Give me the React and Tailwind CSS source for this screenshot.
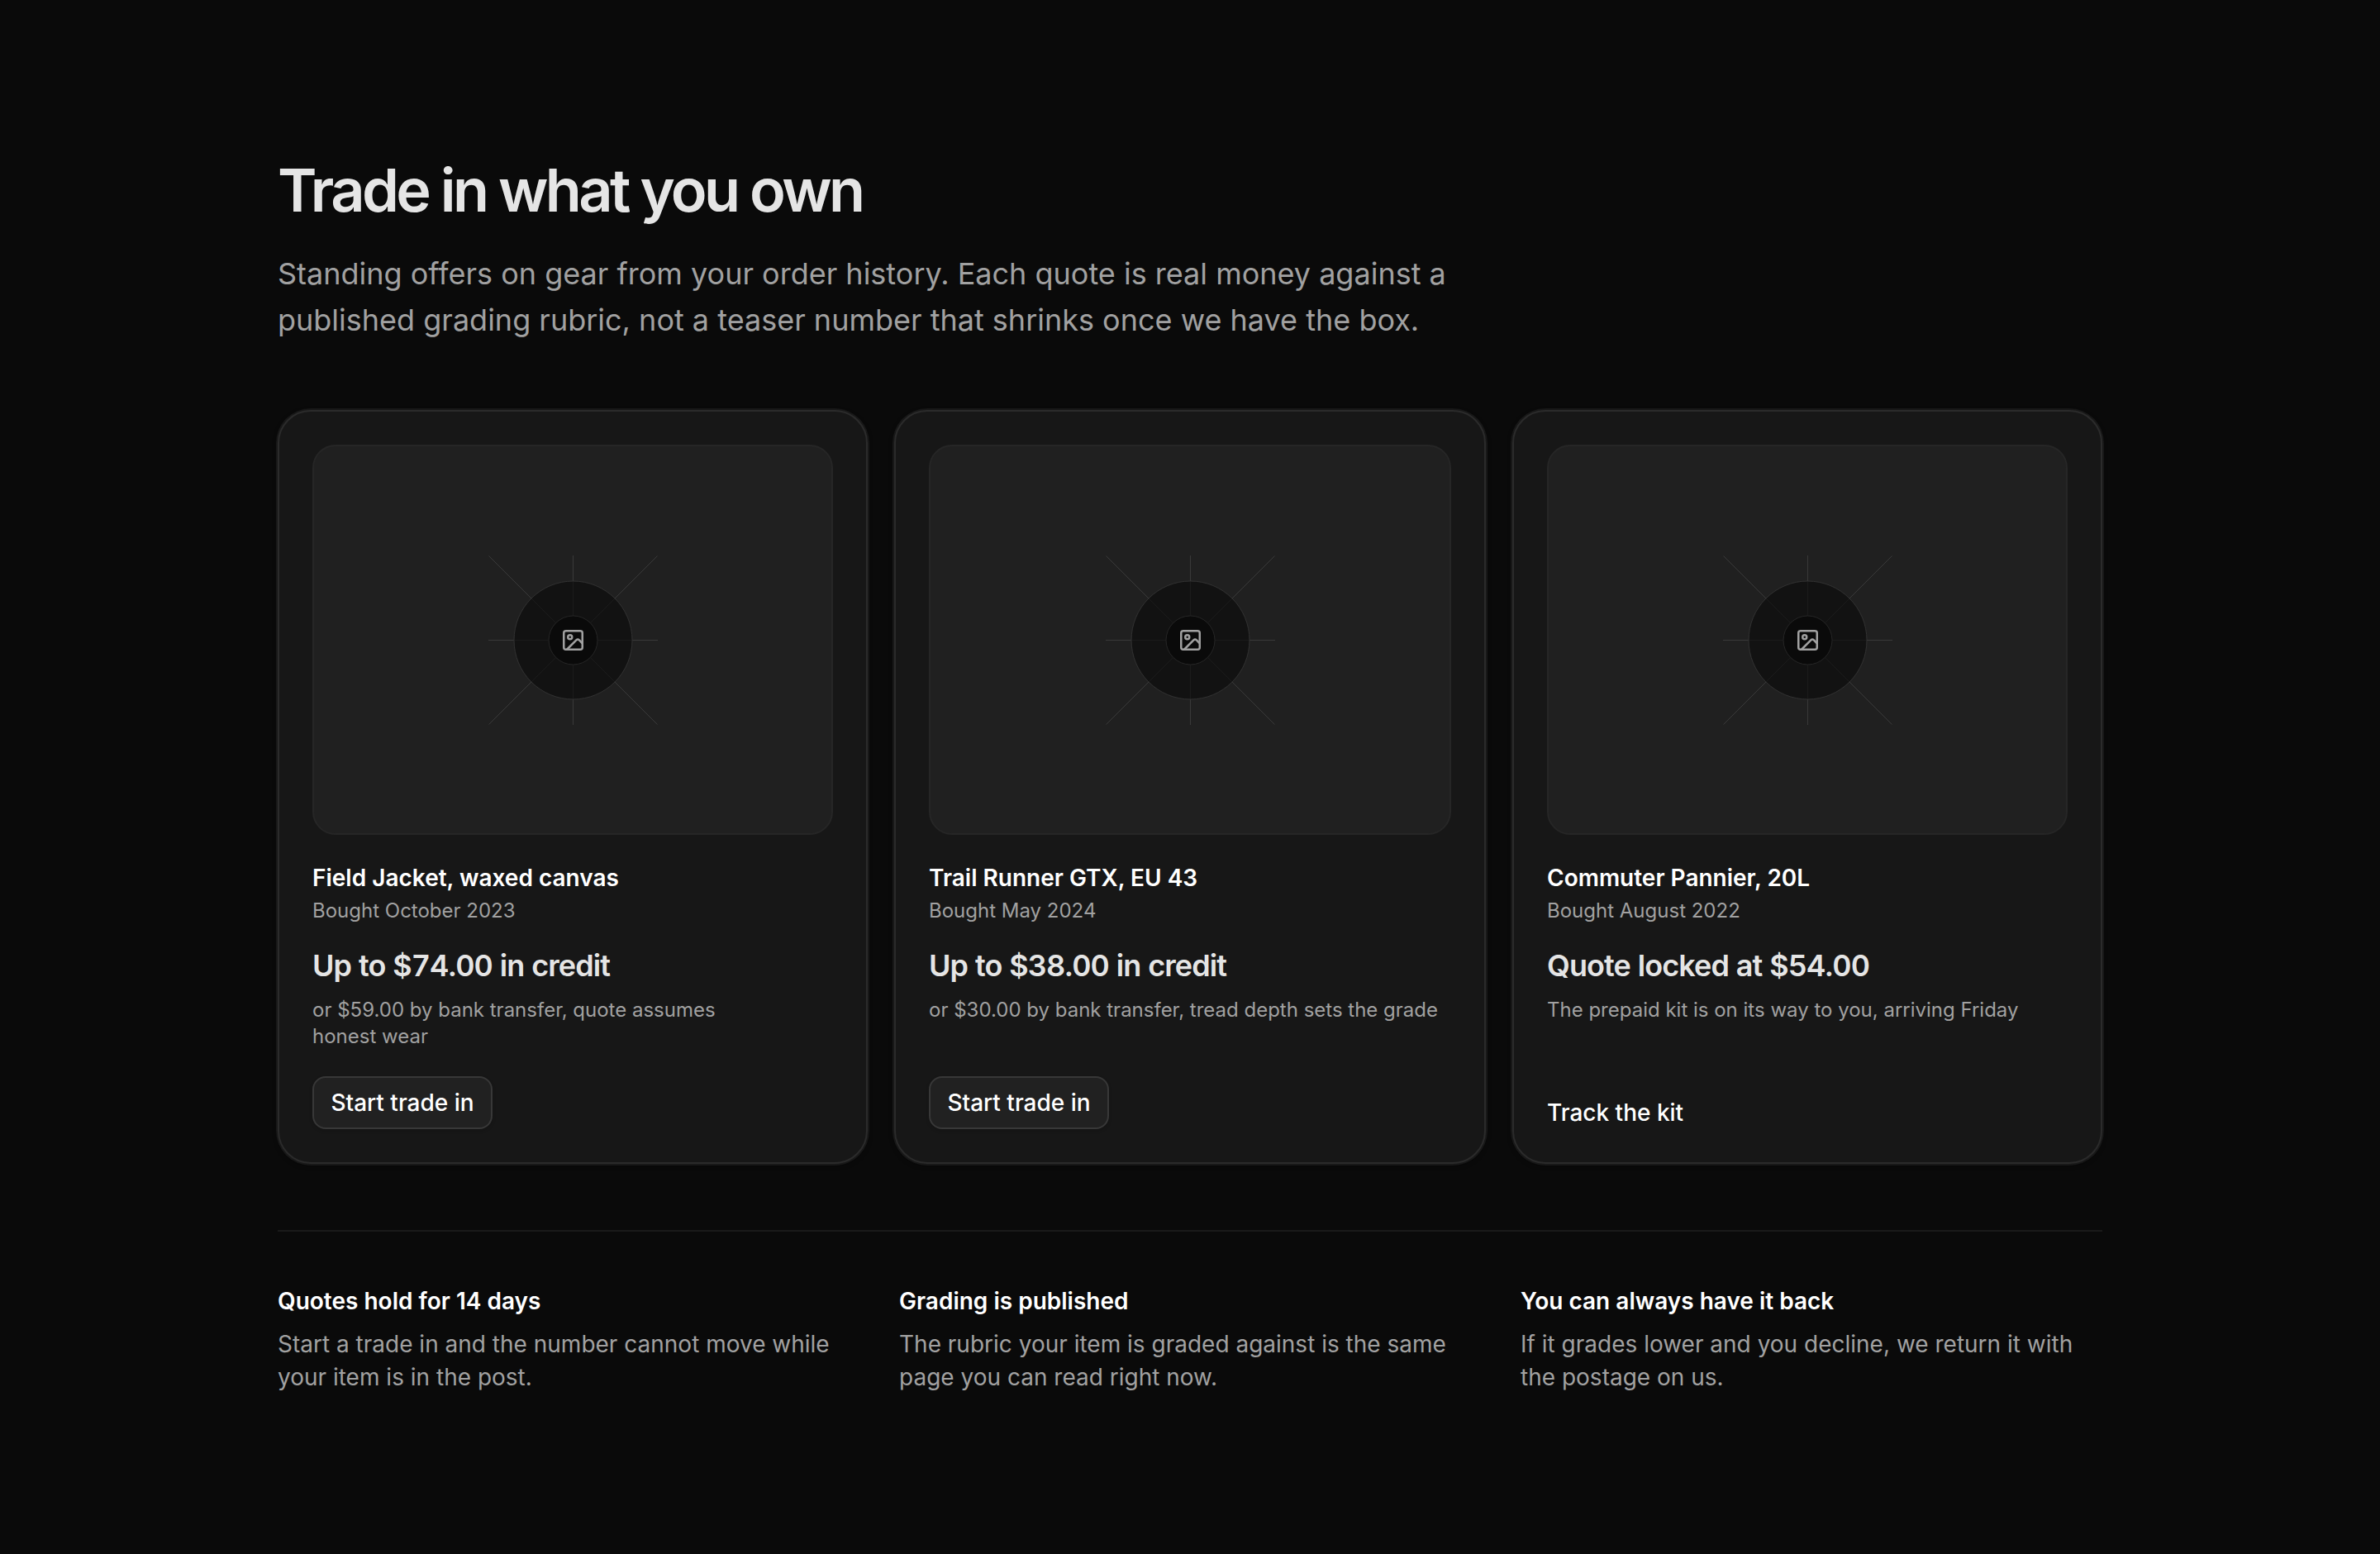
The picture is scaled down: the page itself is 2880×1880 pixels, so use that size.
import React from 'react';
import { Image } from 'lucide-react';

const offers = [
  {
    id: 'field-jacket',
    name: 'Field Jacket, waxed canvas',
    bought: 'Bought October 2023',
    quote: 'Up to $74.00 in credit',
    note: 'or $59.00 by bank transfer, quote assumes honest wear',
    status: 'open',
  },
  {
    id: 'trail-runner',
    name: 'Trail Runner GTX, EU 43',
    bought: 'Bought May 2024',
    quote: 'Up to $38.00 in credit',
    note: 'or $30.00 by bank transfer, tread depth sets the grade',
    status: 'open',
  },
  {
    id: 'commuter-pannier',
    name: 'Commuter Pannier, 20L',
    bought: 'Bought August 2022',
    quote: 'Quote locked at $54.00',
    note: 'The prepaid kit is on its way to you, arriving Friday',
    status: 'locked',
  },
];

const promises = [
  {
    title: 'Quotes hold for 14 days',
    text: 'Start a trade in and the number cannot move while your item is in the post.',
  },
  {
    title: 'Grading is published',
    text: 'The rubric your item is graded against is the same page you can read right now.',
  },
  {
    title: 'You can always have it back',
    text: 'If it grades lower and you decline, we return it with the postage on us.',
  },
];

function Placeholder() {
  return (
    <div className="flex h-[472px] items-center justify-center rounded-[28px] border-2 border-[#262626] bg-[#202020] pt-px pl-px">
      {/* Rays and rings behind the icon */}
      <svg
        viewBox="0 0 205 205"
        className="h-[205px] w-[205px] text-[#a1a1a1]"
        fill="none"
        stroke="#393939"
      >
        <path d="M102.5 0v205M0 102.5h205M.5 .5l204 204M204.5 .5l-204 204" />
        <circle cx="102.5" cy="102.5" r="71.5" fill="#0a0a0a" fillOpacity="0.65" stroke="#323232" />
        <circle cx="102.5" cy="102.5" r="29.5" fill="#0a0a0a" stroke="#262626" />
        <Image x={87.5} y={87.5} size={30} strokeWidth={2} />
      </svg>
    </div>
  );
}

function OfferCard({ offer }) {
  return (
    <article className="flex flex-col rounded-[40px] border-2 border-[#2b2b2b] bg-[#171717] p-10 shadow-[0_0_0_2px_#181818,0_2px_6px_rgba(0,0,0,0.4)]">
      <Placeholder />
      <h2 className="mt-8 text-[28px] leading-10 font-semibold text-white">{offer.name}</h2>
      <p className="mt-1 text-2xl leading-8 text-[#a1a1a1]">{offer.bought}</p>
      <p className="mt-7 text-4xl leading-[45px] font-semibold tracking-tight tabular-nums text-[#e5e5e5]">
        {offer.quote}
      </p>
      <p className="mt-[15px] mb-8 text-2xl leading-8 text-pretty text-[#a1a1a1]">{offer.note}</p>
      <div className="mt-auto flex">
        {offer.status === 'open' ? (
          <button className="h-16 w-[218px] rounded-2xl border-2 border-[#383838] bg-[#212121] text-[28px] leading-10 font-medium text-white shadow-[0_2px_4px_rgba(0,0,0,0.15)]">
            Start trade in
          </button>
        ) : (
          <a href="#" className="text-[28px] leading-10 font-medium text-white">
            Track the kit
          </a>
        )}
      </div>
    </article>
  );
}

export default function App() {
  return (
    <main className="min-h-screen bg-[#0a0a0a] px-[336px] pt-48 font-[Inter,sans-serif]">
      {/* Header */}
      <header>
        <h1 className="text-[72px] leading-[76px] font-semibold tracking-tighter text-[#e5e5e5]">
          Trade in what you own
        </h1>
        <p className="mt-[35px] max-w-[1440px] text-4xl leading-14 text-[#a1a1a1]">
          Standing offers on gear from your order history. Each quote is real money against a
          published grading rubric, not a teaser number that shrinks once we have the box.
        </p>
      </header>

      {/* Offers */}
      <section className="mt-[81px] grid h-[912px] grid-cols-[714px_716px_714px] gap-8">
        {offers.map((offer) => (
          <OfferCard key={offer.id} offer={offer} />
        ))}
      </section>

      {/* Promises */}
      <section className="mt-20 grid grid-cols-3 gap-12 border-t-2 border-[#1a1a1a] pt-16">
        {promises.map((item) => (
          <div key={item.title}>
            <h3 className="text-[28px] leading-10 font-semibold text-white">{item.title}</h3>
            <p className="mt-3 text-[28px] leading-10 text-[#a1a1a1]">{item.text}</p>
          </div>
        ))}
      </section>
    </main>
  );
}
